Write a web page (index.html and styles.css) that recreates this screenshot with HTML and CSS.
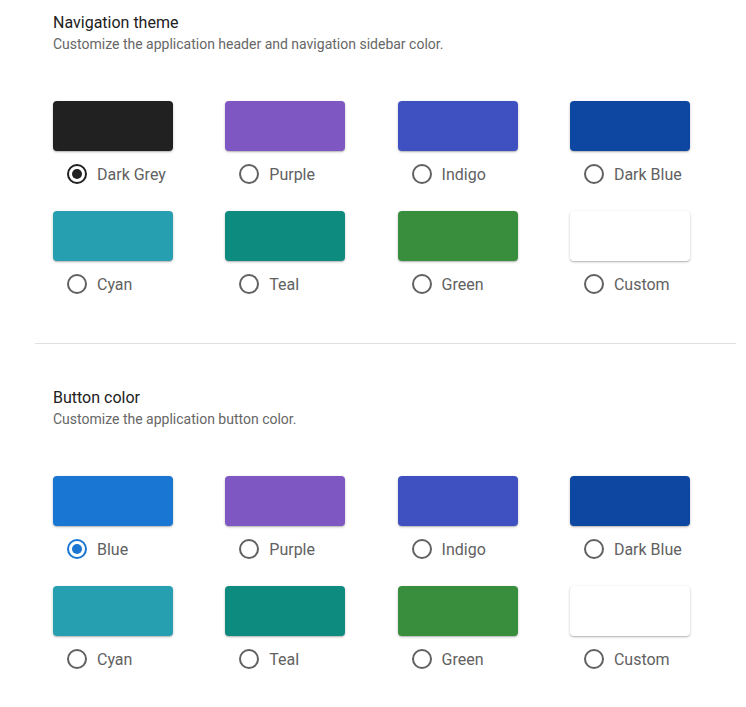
FILE: index.html
```html
<!DOCTYPE html>
<html>
<head>
<meta charset="utf-8">
<link rel="stylesheet" href="styles.css">
</head>
<body>
<div class="page">
  <section class="section">
    <h2 class="title">Navigation theme</h2>
    <p class="subtitle">Customize the application header and navigation sidebar color.</p>
    <div class="grid">
      <div class="item"><div class="swatch c-darkgrey"></div><label class="opt"><span class="radio checked dark"></span>Dark Grey</label></div>
      <div class="item"><div class="swatch c-purple"></div><label class="opt"><span class="radio"></span>Purple</label></div>
      <div class="item"><div class="swatch c-indigo"></div><label class="opt"><span class="radio"></span>Indigo</label></div>
      <div class="item"><div class="swatch c-darkblue"></div><label class="opt"><span class="radio"></span>Dark Blue</label></div>
      <div class="item"><div class="swatch c-cyan"></div><label class="opt"><span class="radio"></span>Cyan</label></div>
      <div class="item"><div class="swatch c-teal"></div><label class="opt"><span class="radio"></span>Teal</label></div>
      <div class="item"><div class="swatch c-green"></div><label class="opt"><span class="radio"></span>Green</label></div>
      <div class="item"><div class="swatch c-custom"></div><label class="opt"><span class="radio"></span>Custom</label></div>
    </div>
  </section>
  <hr class="divider">
  <section class="section second">
    <h2 class="title">Button color</h2>
    <p class="subtitle">Customize the application button color.</p>
    <div class="grid">
      <div class="item"><div class="swatch c-blue"></div><label class="opt"><span class="radio checked blue"></span>Blue</label></div>
      <div class="item"><div class="swatch c-purple"></div><label class="opt"><span class="radio"></span>Purple</label></div>
      <div class="item"><div class="swatch c-indigo"></div><label class="opt"><span class="radio"></span>Indigo</label></div>
      <div class="item"><div class="swatch c-darkblue"></div><label class="opt"><span class="radio"></span>Dark Blue</label></div>
      <div class="item"><div class="swatch c-cyan"></div><label class="opt"><span class="radio"></span>Cyan</label></div>
      <div class="item"><div class="swatch c-teal"></div><label class="opt"><span class="radio"></span>Teal</label></div>
      <div class="item"><div class="swatch c-green"></div><label class="opt"><span class="radio"></span>Green</label></div>
      <div class="item"><div class="swatch c-custom"></div><label class="opt"><span class="radio"></span>Custom</label></div>
    </div>
  </section>
</div>
</body>
</html>
```

FILE: styles.css
```css
html, body {
  margin: 0;
  padding: 0;
  background: #ffffff;
}
body {
  font-family: Roboto, "Liberation Sans", sans-serif;
  color: #212121;
}
.page {
  margin-left: 35px;
  width: 701px;
  padding-top: 13px;
}
.section {
  padding: 0 18px;
}
.title {
  margin: 0;
  font-size: 16px;
  line-height: 20px;
  font-weight: 400;
  color: #212121;
}
.subtitle {
  margin: 1px 0 0;
  font-size: 14px;
  line-height: 20px;
  color: #666666;
}
.grid {
  margin-top: 47px;
  display: grid;
  grid-template-columns: repeat(4, 120px);
  column-gap: 52.3px;
  row-gap: 27px;
}
.item {
  display: flex;
  flex-direction: column;
}
.swatch {
  width: 120px;
  height: 50px;
  border-radius: 4px;
  box-shadow: 0 1px 3px rgba(0,0,0,0.2), 0 1px 1px rgba(0,0,0,0.14);
}
.opt {
  display: flex;
  align-items: center;
  margin-top: 13px;
  padding-left: 14px;
  height: 20px;
  font-size: 16px;
  color: #616161;
}
.radio {
  box-sizing: border-box;
  width: 20px;
  height: 20px;
  border: 2px solid #616161;
  border-radius: 50%;
  margin-right: 10px;
  display: flex;
  align-items: center;
  justify-content: center;
}
.radio.checked::after {
  content: "";
  width: 10px;
  height: 10px;
  border-radius: 50%;
  background: currentColor;
}
.radio.dark {
  border-color: #212121;
  color: #212121;
}
.radio.blue {
  border-color: #1976d2;
  color: #1976d2;
}
.divider {
  margin: 49px 0 0;
  border: 0;
  border-top: 1px solid #e0e0e0;
  height: 0;
}
.second {
  padding-top: 44px;
}
.c-darkgrey { background: #212121; }
.c-purple { background: #7e57c2; }
.c-indigo { background: #3f51c0; }
.c-darkblue { background: #0d47a1; }
.c-cyan { background: #26a0b1; }
.c-teal { background: #0d8b7e; }
.c-green { background: #388e3c; }
.c-custom { background: #ffffff; }
.c-blue { background: #1976d2; }
```
